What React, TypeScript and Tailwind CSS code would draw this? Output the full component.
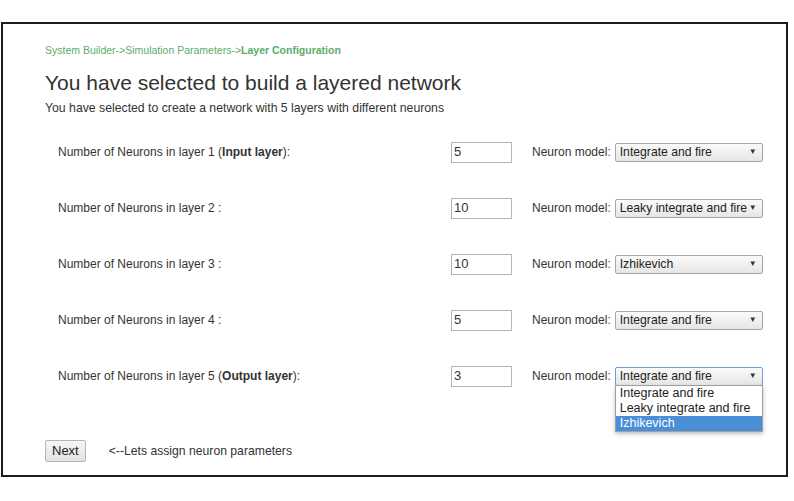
import React from "react";

const rows = [
  { n: 1, suffix: "Input layer", value: "5", model: "Integrate and fire" },
  { n: 2, suffix: null, value: "10", model: "Leaky integrate and fire" },
  { n: 3, suffix: null, value: "10", model: "Izhikevich" },
  { n: 4, suffix: null, value: "5", model: "Integrate and fire" },
  { n: 5, suffix: "Output layer", value: "3", model: "Integrate and fire", open: true },
];

function Select({ model, open }: { model: string; open?: boolean }) {
  return (
    <div className="relative">
      <div
        className={
          open
            ? "w-[148px] h-[19px] border border-[#6a9fd8] rounded-[2px] bg-gradient-to-b from-[#fafafa] to-[#e6e6e6] flex items-center pl-[4px] pr-[5px] text-[12.2px] text-[#222]"
            : "w-[148px] h-[19px] border border-[#a6a6a6] rounded-[2px] bg-gradient-to-b from-[#fafafa] to-[#e6e6e6] flex items-center pl-[4px] pr-[5px] text-[12.2px] text-[#222]"
        }
      >
        <span className="flex-1 whitespace-nowrap leading-none">{model}</span>
        <span className="text-[8px] leading-none text-[#333]">▼</span>
      </div>
      {open && (
        <div className="absolute left-0 top-[18px] w-[148px] border border-[#a0a0a0] bg-white shadow-[0_2px_4px_rgba(0,0,0,0.25)] text-[12.5px] text-[#222] leading-[15px] z-10">
          <div className="px-[4px] h-[15px]">Integrate and fire</div>
          <div className="px-[4px] h-[15px]">Leaky integrate and fire</div>
          <div className="px-[4px] h-[15px] bg-[#4a8ed8] text-white">Izhikevich</div>
        </div>
      )}
    </div>
  );
}

export default function App() {
  return (
    <div className="w-[794px] h-[501px] bg-white pt-[22px] pl-[1px] font-['Liberation_Sans',Arial,sans-serif] text-[#333]">
      <div className="w-[787px] h-[455px] border-2 border-[#1c1c1c] pl-[42px] pt-[19px]">
        <div className="text-[10.5px] text-[#5cad6a] leading-[14px]">
          System Builder-&gt;Simulation Parameters-&gt;<span className="font-bold">Layer Configuration</span>
        </div>
        <h1 className="mt-[13px] text-[21px] leading-[26px] text-[#333]">You have selected to build a layered network</h1>
        <p className="mt-[5px] text-[12.25px] leading-[14px] text-[#333]">
          You have selected to create a network with 5 layers with different neurons
        </p>
        <div className="mt-[9px] flex flex-col">
          {rows.map((r) => (
            <div key={r.n} className="h-[56px] flex items-center">
              <div className="w-[406px] pl-[13px] text-[12px] text-[#333] whitespace-nowrap">
                Number of Neurons in layer {r.n}{" "}
                {r.suffix ? (
                  <>
                    (<span className="font-bold">{r.suffix}</span>):
                  </>
                ) : (
                  ":"
                )}
              </div>
              <div className="w-[61px] h-[21px] border border-[#b5b5b5] flex items-center pl-[2px] text-[13px] text-[#333]">
                {r.value}
              </div>
              <div className="ml-[20px] text-[12px] text-[#333] whitespace-nowrap">Neuron model:</div>
              <div className="ml-[4px]">
                <Select model={r.model} open={r.open} />
              </div>
            </div>
          ))}
        </div>
        <div className="mt-[36px] flex items-center">
          <div className="h-[22px] px-[6px] border border-[#b5b5b5] rounded-[2px] bg-gradient-to-b from-[#f6f6f6] to-[#e2e2e2] flex items-center text-[13px] text-[#222]">
            Next
          </div>
          <div className="ml-[23px] text-[12.2px] text-[#333]">&lt;--Lets assign neuron parameters</div>
        </div>
      </div>
    </div>
  );
}
